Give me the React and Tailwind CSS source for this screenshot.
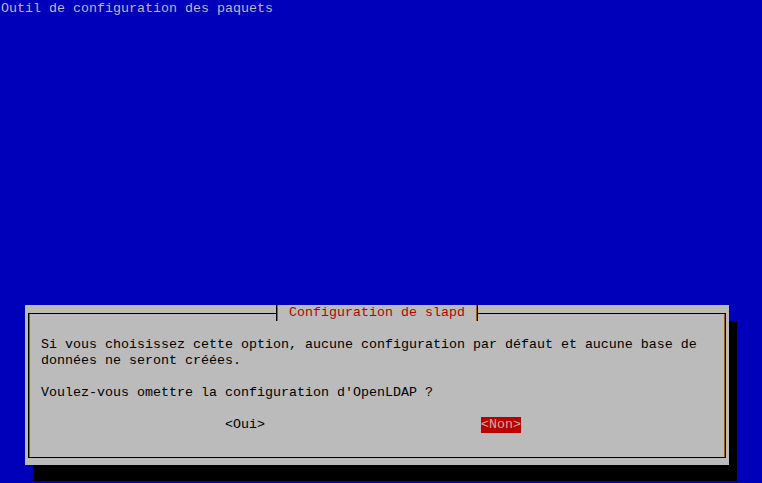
import React from 'react';

const App = () => {
    return (
        <div className="w-[762px] h-[483px] overflow-hidden bg-[#0000bb] font-['Liberation_Mono',monospace] text-[13.33px] leading-[16px] whitespace-pre">
            <div className="pt-px pl-px text-[#bbbbbb]">Outil de configuration des paquets</div>

            <div className="relative ml-[25px] mt-[288px] w-[704px] h-[160px] bg-[#bbbbbb] px-[3px] pt-[8px] pb-[7px] shadow-[8px_16px_0_0_#000]">
                <div className="h-full border-y border-x border-black shadow-[inset_1px_0_0_#9a5b1c,inset_-1px_0_0_#9a5b1c] text-black pl-[12px] pt-[23px]">
                    <div>Si vous choisissez cette option, aucune configuration par défaut et aucune base de</div>
                    <div>données ne seront créées.</div>
                    <div className="h-4"></div>
                    <div>Voulez-vous omettre la configuration d'OpenLDAP ?</div>
                    <div className="h-4"></div>
                    <div className="flex">
                        <span className="ml-[184px]">&lt;Oui&gt;</span>
                        <span className="ml-[216px] bg-[#bb0000] text-[#c8b0b0]">&lt;Non&gt;</span>
                    </div>
                </div>

                {/* titre posé sur la bordure */}
                <div className="absolute top-0 left-[251px] h-4 flex">
                    <div className="w-px h-4 bg-black"></div>
                    <div className="w-px h-4 bg-[#9a5b1c]"></div>
                    <div className="w-[198px] h-4 bg-[#bbbbbb] pl-[11px] text-[#bb0000]">Configuration de slapd</div>
                    <div className="w-px h-4 bg-[#9a5b1c]"></div>
                    <div className="w-px h-4 bg-black"></div>
                </div>
            </div>
        </div>
    );
};

export default App;
